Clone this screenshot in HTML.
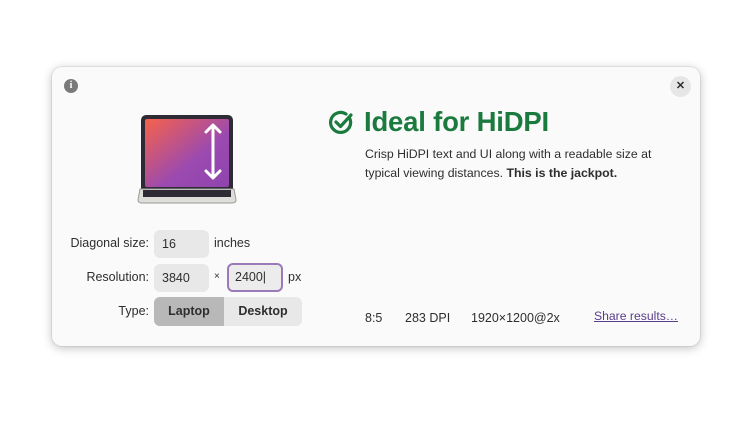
<!DOCTYPE html>
<html><head><style>
body{margin:0;width:752px;height:423px;background:#fff;font-family:"Liberation Sans",sans-serif;position:relative;overflow:hidden;color:#2e2e2e}
.win{position:absolute;left:52px;top:67px;width:648px;height:279px;background:#fafafa;border-radius:10px;box-shadow:0 2px 10px rgba(0,0,0,.25),0 0 0 1px rgba(0,0,0,.06)}
.a{position:absolute;font-size:12.5px;white-space:nowrap}
.r{position:absolute;font-size:12.5px;white-space:nowrap;right:603px;text-align:right}
.ent{position:absolute;background:#e8e8e8;border-radius:6px;height:28px;font-size:12.5px;line-height:28px;padding-left:8px;box-sizing:border-box}
</style></head><body>
<div class="win"></div>
<div style="position:absolute;left:64px;top:79px;width:14px;height:14px;border-radius:50%;background:#7a7a7a;color:#fff;font-size:10px;font-weight:bold;text-align:center;line-height:14px;font-family:'Liberation Serif',serif">i</div>
<div style="position:absolute;left:670px;top:76px;width:21px;height:21px;border-radius:50%;background:#e6e6e6;text-align:center;line-height:21px;font-size:11px;font-weight:bold">✕</div>
<svg style="position:absolute;left:136px;top:112px" width="102" height="95" viewBox="0 0 102 95">
<defs><linearGradient id="g" x1="0" y1="0" x2="1" y2="1"><stop offset="0" stop-color="#f6624a"/><stop offset=".6" stop-color="#9b4ab0"/><stop offset="1" stop-color="#8e44ad"/></linearGradient></defs>
<rect x="5" y="3" width="92" height="78" rx="5" fill="#2f2b35"/>
<rect x="9" y="7" width="84" height="68" rx="2" fill="url(#g)"/>
<path d="M77 13 V66 M70 20 L77 13 L84 20 M70 59 L77 66 L84 59" stroke="#fff" stroke-width="3" fill="none" stroke-linecap="round" stroke-linejoin="round"/>
<path d="M4 77 H98 L100 88 Q100 91 96 91 H6 Q2 91 2 88 Z" fill="#deddda" stroke="#9a9996" stroke-width="1"/>
<rect x="7" y="78" width="88" height="7" fill="#2f2b35"/>
</svg>
<svg style="position:absolute;left:329px;top:110px" width="25" height="25" viewBox="0 0 25 25"><path d="M21 9 A10 10 0 1 1 17 4" stroke="#1b7a3e" stroke-width="3.2" fill="none" stroke-linecap="round"/><path d="M7 12 L11.5 16.5 L22 5" stroke="#1b7a3e" stroke-width="3.2" fill="none" stroke-linecap="round" stroke-linejoin="round"/></svg>
<div class="a" style="left:364px;top:106px;font-size:27.5px;font-weight:bold;color:#1b7a3e;letter-spacing:-0.2px">Ideal for HiDPI</div>
<div class="a" style="left:365px;top:145px;line-height:19px;font-size:12.3px">Crisp HiDPI text and UI along with a readable size at<br>typical viewing distances. <b>This is the jackpot.</b></div>
<div class="r" style="top:236px">Diagonal size:</div>
<div class="ent" style="left:154px;top:230px;width:55px">16</div>
<div class="a" style="left:214px;top:236px">inches</div>
<div class="r" style="top:270px">Resolution:</div>
<div class="ent" style="left:154px;top:264px;width:55px">3840</div>
<div class="a" style="left:214px;top:271px;font-size:10px">×</div>
<div class="ent" style="left:227px;top:263px;width:56px;height:29px;border:2px solid #9a7ab8;background:#ececec;line-height:25px;padding-left:6px">2400|</div>
<div class="a" style="left:288px;top:270px">px</div>
<div class="r" style="top:304px">Type:</div>
<div style="position:absolute;left:154px;top:297px;width:148px;height:29px;border-radius:6px;background:#e8e8e8;overflow:hidden;font-size:12.5px;font-weight:bold;line-height:29px">
<div style="position:absolute;left:0;top:0;width:70px;height:29px;background:#b8b8b8;text-align:center">Laptop</div>
<div style="position:absolute;left:70px;top:0;width:78px;text-align:center">Desktop</div></div>
<div class="a" style="left:365px;top:311px">8:5</div>
<div class="a" style="left:405px;top:311px">283 DPI</div>
<div class="a" style="left:471px;top:311px">1920×1200@2x</div>
<div class="a" style="left:594px;top:309px;color:#5a3d8a;text-decoration:underline;font-size:12.2px">Share results…</div>
</body></html>
